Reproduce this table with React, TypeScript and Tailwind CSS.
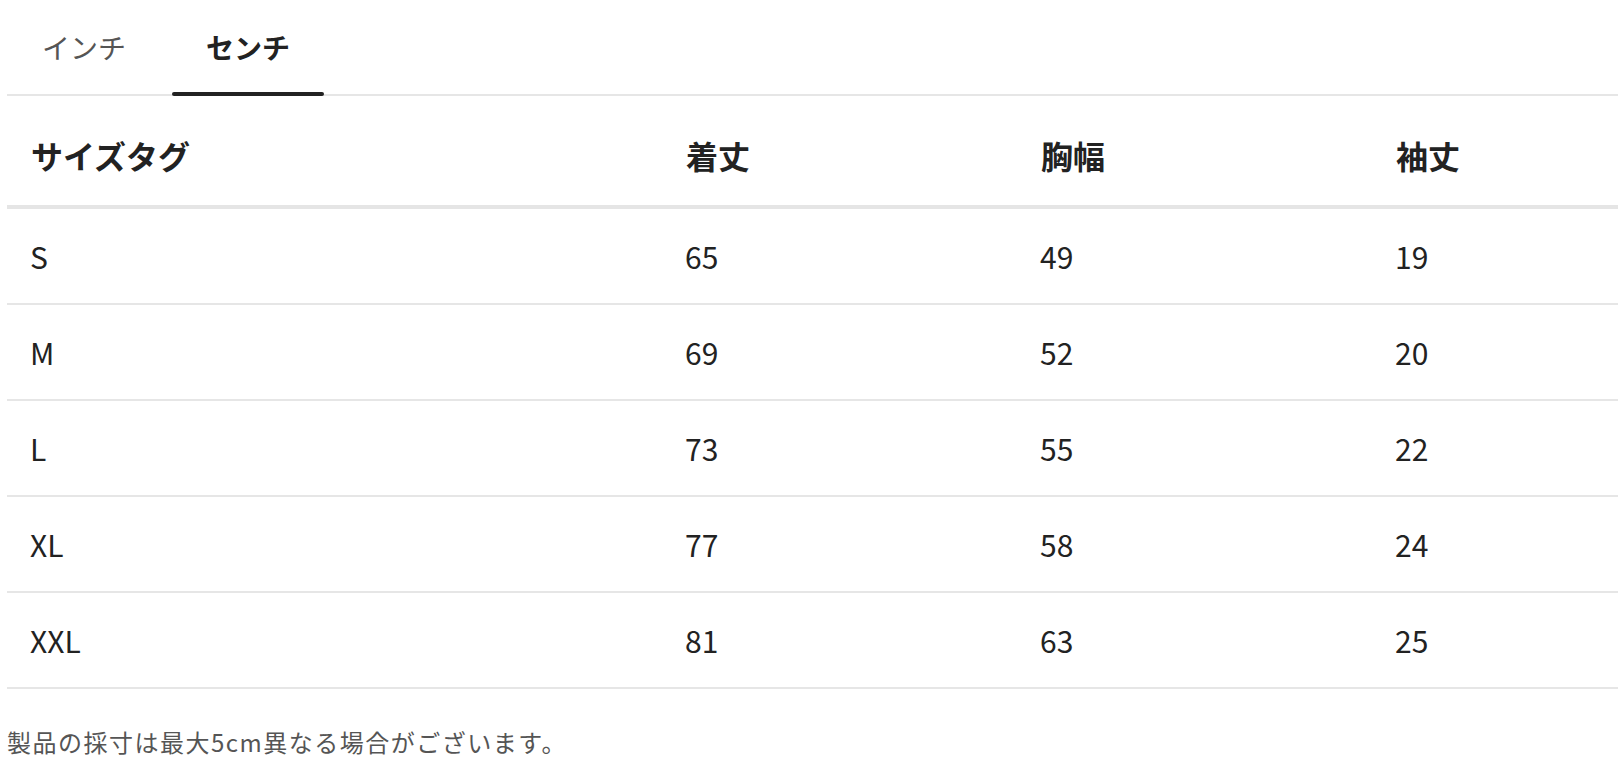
import React from "react";

const rows = [
  ["S", "65", "49", "19"],
  ["M", "69", "52", "20"],
  ["L", "73", "55", "22"],
  ["XL", "77", "58", "24"],
  ["XXL", "81", "63", "25"],
];

const cols = "grid grid-cols-[655px_355px_355px_1fr]";

export default function App() {
  return (
    <div
      className="w-[1618px] min-h-[782px] bg-white pl-[7px] overflow-hidden"
      style={{ fontFamily: '"Noto Sans CJK JP", "Noto Sans", sans-serif' }}
    >
      {/* Tabs */}
      <div className="flex h-[96px] gap-[11px] border-b-2 border-[#e6e6e6]">
        <button className="flex h-full items-center px-[35px] text-[28px] leading-none text-[#555]">
          インチ
        </button>
        <button className="relative flex h-full items-center px-[34px] text-[28px] font-bold leading-none text-[#222]">
          センチ
          <span className="absolute bottom-[-2px] left-0 right-0 h-[4px] rounded-full bg-[#222]" />
        </button>
      </div>

      {/* Table */}
      <div className="w-full">
        <div className={`${cols} h-[113px] border-b-4 border-[#e5e5e5] pt-[9px] items-center`}>
          {["サイズタグ", "着丈", "胸幅", "袖丈"].map((h) => (
            <div key={h} className="pl-[24px] text-[32px] font-bold leading-none text-[#222]">
              {h}
            </div>
          ))}
        </div>
        {rows.map((r) => (
          <div
            key={r[0]}
            className={`${cols} h-[96px] border-b-2 border-[#e6e6e6] items-center`}
          >
            {r.map((c, i) => (
              <div key={i} className="pl-[23px] text-[30px] leading-none text-[#222]">
                {c}
              </div>
            ))}
          </div>
        ))}
      </div>

      <p className="mt-[41px] text-[24px] leading-none tracking-[1.5px] text-[#555]">
        製品の採寸は最大5cm異なる場合がございます。
      </p>
    </div>
  );
}
